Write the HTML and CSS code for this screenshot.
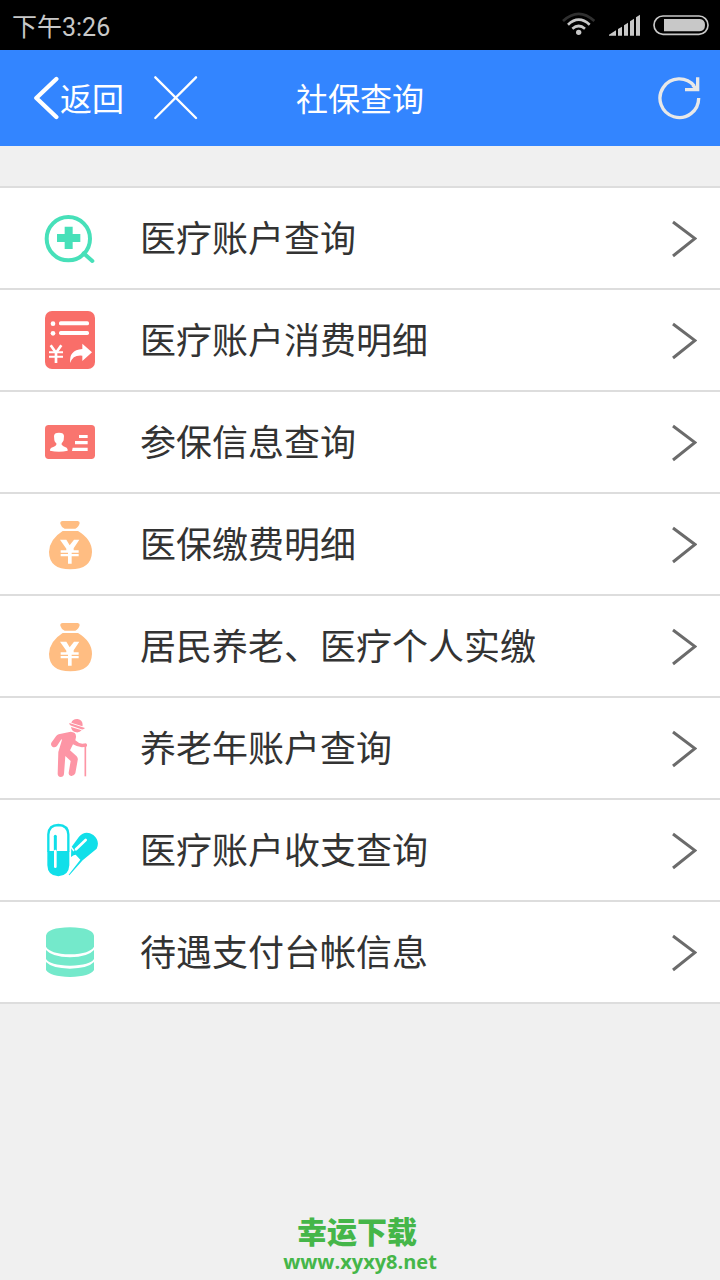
FILE: index.html
```html
<!DOCTYPE html>
<html lang="zh-CN">
<head>
<meta charset="utf-8">
<meta name="viewport" content="width=device-width, initial-scale=1">
<title>社保查询</title>
<link rel="stylesheet" href="styles.css">
</head>
<body>
<svg class="symbols" aria-hidden="true">
  <symbol id="chevron" viewBox="0 0 28 40"><path d="M4 4 26 20.500 4 38" fill="none" stroke="#6b6b6b" stroke-width="3"/></symbol>
  <symbol id="moneybag" viewBox="30 12 180 180">
    <path fill="#ffbd82" d="M98 33H143Q150 34 149 40Q146 52 136 56H104Q94 52 91 41Q90 34 98 33ZM98 63H144Q186 88 186 126Q184 178 121 178Q58 178 57 126Q58 88 98 63Z"/>
    <path fill="#fff" d="M90 89H109L119 106 132 89H148L131 115V121H146V128H125V132H146V139H125V161H114V139H92V132H114V128H92V121H109V116Z"/>
  </symbol>
</svg>
<div class="status-bar">
  <span class="clock">下午3:26</span>
  <span class="indicators">
    <svg width="34" height="26" viewBox="0 0 102 78" fill="none" stroke="#c8c8c8" stroke-width="8">
      <path stroke="#303030" d="M6 27Q53-16 100 27"/><path d="M21 38Q53 8 86 38"/><path d="M34 50Q53 34 72 50"/><circle cx="53" cy="61" r="8" fill="#c8c8c8" stroke="none"/>
    </svg>
    <svg width="32" height="24" viewBox="0 0 96 72" fill="#c8c8c8">
      <path d="M3 68V65L24 52V68ZM30 68V48L42 41V68ZM48 68V37L60 29V68ZM66 68V25L78 17V68ZM84 68V13L96 5V68Z"/>
    </svg>
    <svg width="56" height="22" viewBox="0 0 168 66">
      <rect x="3" y="6" width="162" height="55" rx="27" fill="none" stroke="#c8c8c8" stroke-width="5"/>
      <path fill="#c8c8c8" d="M33 15H140Q156 17 156 33Q156 50 140 52H33Z"/>
    </svg>
  </span>
</div>
<header class="title-bar">
  <div class="actions">
    <button class="back" type="button">
      <svg width="26" height="44" viewBox="0 0 78 132"><path d="M67 9 7 66 67 123" fill="none" stroke="#fff" stroke-width="13" stroke-linecap="round" stroke-linejoin="round"/></svg>
      <span>返回</span>
    </button>
    <button class="icon-button" type="button" aria-label="关闭">
      <svg width="44" height="44" viewBox="0 0 132 132"><path d="M4 4 126 126M126 4 4 126" fill="none" stroke="#fff" stroke-width="7" stroke-linecap="round"/></svg>
    </button>
  </div>
  <h1>社保查询</h1>
  <button class="icon-button refresh" type="button" aria-label="刷新">
    <svg width="44" height="44" viewBox="0 0 132 132" fill="none" stroke="#e8e8e8" stroke-width="10"><path d="M122 66A58 58 0 1 1 109 30"/><path d="M119 4V41H81"/><path d="M104 28 119 41"/></svg>
  </button>
</header>
<nav>
  <ul class="menu">
    <li><a href="#medical">
      <svg class="icon" viewBox="30 24 180 180"><circle cx="115" cy="116" r="65" fill="none" stroke="#47e0b9" stroke-width="12"/><path d="M161 160 187 183" stroke="#47e0b9" stroke-width="12" stroke-linecap="round"/><path fill="#47e0b9" d="M104 80H128V102H151V126H128V147H104V126H81V102H104Z"/></svg>
      <span class="label">医疗账户查询</span><svg class="arrow"><use href="#chevron"/></svg></a></li>
    <li><a href="#spending">
      <svg class="icon" viewBox="30 30 180 180"><rect x="45" y="33" width="150" height="174" rx="21" fill="#f96e69"/><g fill="#fff"><circle cx="69" cy="71" r="7"/><circle cx="69" cy="100" r="7"/><rect x="87" y="64" width="90" height="12" rx="5"/><rect x="87" y="93" width="90" height="12" rx="5"/><path d="M157 131 186 157 157 183V167Q128 164 121 189Q115 151 157 147Z"/></g><path fill="none" stroke="#fff" stroke-width="8" d="M62 136 78 158 94 136M78 155V189"/><path stroke="#fff" stroke-width="6" d="M57 157H99M57 170H99"/></svg>
      <span class="label">医疗账户消费明细</span><svg class="arrow"><use href="#chevron"/></svg></a></li>
    <li><a href="#insured">
      <svg class="icon" viewBox="30 6 180 180"><rect x="45" y="45" width="150" height="102" rx="11" fill="#f9756f"/><path fill="#fff" d="M87 68Q102 68 102 78L101 91Q97 99 95 100V104Q98 109 110 113Q114 117 113 122Q87 128 60 122Q59 116 64 113Q77 109 79 104V100Q74 97 73 91L72 78Q72 68 87 68ZM147 75H173V84H147ZM135 93H173V103H135ZM128 113H173V123H126Z"/></svg>
      <span class="label">参保信息查询</span><svg class="arrow"><use href="#chevron"/></svg></a></li>
    <li><a href="#payment">
      <svg class="icon"><use href="#moneybag"/></svg>
      <span class="label">医保缴费明细</span><svg class="arrow"><use href="#chevron"/></svg></a></li>
    <li><a href="#resident">
      <svg class="icon"><use href="#moneybag"/></svg>
      <span class="label">居民养老、医疗个人实缴</span><svg class="arrow"><use href="#chevron"/></svg></a></li>
    <li><a href="#pension">
      <svg class="icon" viewBox="30 24 180 180"><g fill="#fd95a5"><path d="M124 38Q128 26 143 27Q158 29 158 46L157 49ZM118 39 165 54Q162 59 154 58L126 48Q117 45 118 39ZM123 51 155 61Q149 68 139 67Q125 65 123 51Z"/><path d="M86 73 122 65Q139 66 138 81L136 91Q146 101 157 101L168 100Q174 105 169 110L156 112Q142 111 129 103L120 121L140 139Q145 145 143 151L136 190Q132 199 123 198Q115 196 116 188L122 153L106 138L102 192Q101 201 92 201Q83 200 83 191L85 126L96 89L94 88L81 108Q74 115 67 110Q61 106 64 98L78 79Q81 75 86 73Z"/></g><path d="M166 104V199" stroke="#fd95a5" stroke-width="5"/></svg>
      <span class="label">养老年账户查询</span><svg class="arrow"><use href="#chevron"/></svg></a></li>
    <li><a href="#balance">
      <svg class="icon" viewBox="30 15 180 180"><path fill="#11dfe9" d="M52 108H118V151Q116 183 85 184Q53 183 52 151ZM124 97 147 65Q166 45 190 60Q211 78 200 101L158 136L118 181L116 179L151 134L137 119L131 121L123 126Z"/><path d="M55 110V58Q57 30 85 30Q114 31 115 58V110" fill="none" stroke="#11dfe9" stroke-width="7"/><path d="M76 64V108" stroke="#11dfe9" stroke-width="9" stroke-linecap="round"/><path d="M76 108V155M138 103 167 75" stroke="#fff" stroke-width="8" stroke-linecap="round"/><path d="M123 96 132 108" stroke="#fff" stroke-width="4"/></svg>
      <span class="label">医疗账户收支查询</span><svg class="arrow"><use href="#chevron"/></svg></a></li>
    <li><a href="#ledger">
      <svg class="icon" viewBox="30 21 180 180"><path fill="#74e9cb" d="M48 62Q52 38 120 37Q188 38 192 62V95Q181 116 120 118Q59 116 48 95ZM48 105Q66 126 120 127Q174 126 192 105V132Q181 150 120 152Q59 150 48 132ZM48 141Q66 160 120 161Q174 160 192 141V165Q181 184 120 186Q59 184 48 165Z"/></svg>
      <span class="label">待遇支付台帐信息</span><svg class="arrow"><use href="#chevron"/></svg></a></li>
  </ul>
</nav>
<footer class="credit"><strong>幸运下载</strong><span>www.xyxy8.net</span></footer>
</body>
</html>
```
FILE: styles.css
```css
* { box-sizing: border-box; }
body {
  margin: 0;
  min-height: 100vh;
  display: flex;
  flex-direction: column;
  background: #f0f0f0;
  color: #333;
  font-family: Roboto, "Noto Sans CJK SC", sans-serif;
}
svg { display: block; flex: none; }
.symbols { position: absolute; width: 0; height: 0; }
.status-bar {
  height: 50px;
  padding: 0 11px 0 12px;
  display: flex;
  align-items: center;
  justify-content: space-between;
  background: #000;
  color: #c8c8c8;
}
.clock { font-size: 25px; line-height: 36px; padding-top: 5px; }
.indicators { display: flex; align-items: center; gap: 13px; }
.title-bar {
  height: 96px;
  padding: 0 18px 0 34px;
  display: grid;
  grid-template-columns: 1fr auto 1fr;
  align-items: center;
  background: #3385ff;
  color: #fff;
}
.title-bar h1 {
  margin: 0 16px 0 0;
  padding-top: 4px;
  font-size: 32px;
  font-weight: 400;
  line-height: 48px;
}
.actions { display: flex; align-items: center; gap: 30px; }
.title-bar button {
  padding: 0;
  border: 0;
  background: none;
  color: inherit;
  font: inherit;
}
.title-bar .back {
  display: flex;
  align-items: center;
  font-size: 32px;
  line-height: 48px;
}
.back span { padding-top: 4px; }
.refresh { justify-self: end; }
.menu {
  margin: 40px 0 0;
  padding: 0;
  list-style: none;
  background: #fff;
  border-top: 2px solid #ddd;
}
.menu li { border-bottom: 2px solid #ddd; }
.menu a {
  min-height: 100px;
  padding: 0 23px 0 40px;
  display: flex;
  align-items: center;
  color: #333;
  text-decoration: none;
}
.icon { width: 60px; height: 60px; margin-right: 40px; }
.label { flex: 1; padding-top: 3px; font-size: 36px; line-height: 52px; }
.arrow { width: 28px; height: 40px; }
.credit {
  margin-top: auto;
  padding-bottom: 4px;
  display: flex;
  flex-direction: column;
  align-items: center;
  color: #45b649;
  font-weight: 700;
}
.credit strong { padding-right: 6px; font-size: 30px; line-height: 30px; }
.credit span { font-family: "Open Sans", sans-serif; font-size: 20px; line-height: 28px; }
```
